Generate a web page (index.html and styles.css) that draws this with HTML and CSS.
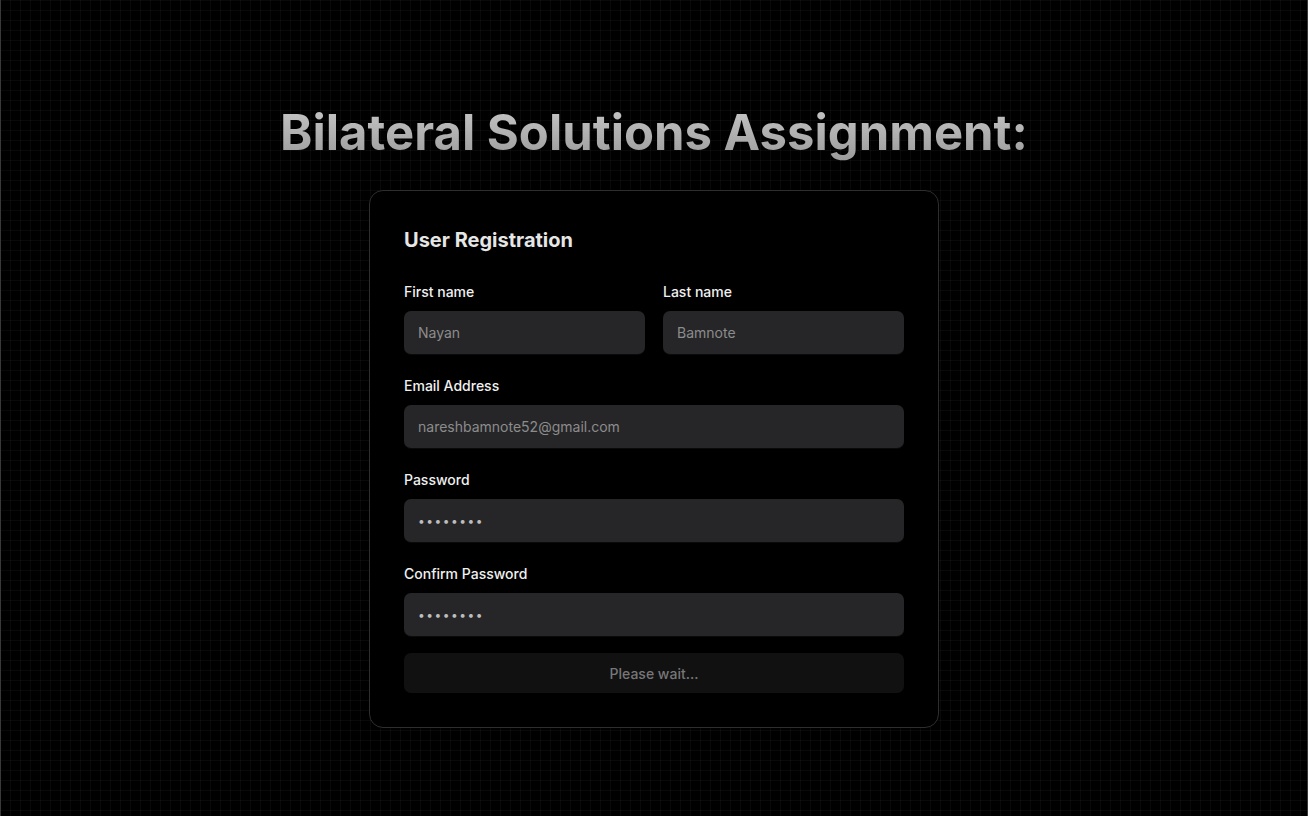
FILE: index.html
```html
<!DOCTYPE html>
<html lang="en">
<head>
<meta charset="utf-8">
<title>Bilateral Solutions Assignment</title>
<link rel="stylesheet" href="styles.css">
</head>
<body>
<main class="page">
  <h1 class="title">Bilateral Solutions Assignment:</h1>
  <form class="card">
    <h2 class="card-title">User Registration</h2>
    <div class="row">
      <div class="field">
        <label class="label">First name</label>
        <input class="input" type="text" placeholder="Nayan">
      </div>
      <div class="field">
        <label class="label">Last name</label>
        <input class="input" type="text" placeholder="Bamnote">
      </div>
    </div>
    <div class="field">
      <label class="label">Email Address</label>
      <input class="input" type="email" placeholder="nareshbamnote52@gmail.com">
    </div>
    <div class="field">
      <label class="label">Password</label>
      <input class="input" type="password" value="12345678">
    </div>
    <div class="field">
      <label class="label">Confirm Password</label>
      <input class="input" type="password" value="12345678">
    </div>
    <button class="submit" type="button" disabled>Please wait...</button>
  </form>
</main>
</body>
</html>
```

FILE: styles.css
```css
* { box-sizing: border-box; }
html, body { margin: 0; padding: 0; }
body {
  background-color: #000;
  background-image:
    linear-gradient(to right, rgba(255,255,255,0.035) 1px, transparent 1px),
    linear-gradient(to bottom, rgba(255,255,255,0.035) 1px, transparent 1px);
  background-size: 10px 10px;
  font-family: Inter, "Noto Sans", sans-serif;
  color: #e5e5e5;
}
.page {
  min-height: 816px;
  display: flex;
  flex-direction: column;
  align-items: center;
  padding-top: 104px;
  border-left: 1px solid #3a3a3a;
  border-right: 1px solid #3a3a3a;
}
.title {
  margin: 0;
  font-size: 49px;
  line-height: 58px;
  font-weight: 700;
  background: linear-gradient(to bottom, #c8c8c8, #9a9a9a);
  -webkit-background-clip: text;
  background-clip: text;
  color: transparent;
}
.card {
  margin-top: 28px;
  width: 570px;
  border: 1px solid #2e2e2e;
  border-radius: 14px;
  background: #000;
  padding: 33px 34px 34px 34px;
  display: flex;
  flex-direction: column;
}
.card-title {
  margin: 0;
  font-size: 20px;
  line-height: 32px;
  font-weight: 700;
  color: #e6e6e6;
}
.row {
  display: grid;
  grid-template-columns: minmax(0, 1fr) minmax(0, 1fr);
  gap: 18px;
  margin-top: 26px;
}
.row .field { margin-top: 0; }
.field {
  display: flex;
  flex-direction: column;
  min-width: 0;
  margin-top: 22px;
}
.label {
  font-size: 14px;
  line-height: 20px;
  font-weight: 500;
  color: #f0f0f0;
  margin-bottom: 9px;
}
.input {
  width: 100%;
  min-width: 0;
  height: 43px;
  border: none;
  border-radius: 7px;
  background: #262628;
  padding: 0 14px;
  font-family: Inter, "Noto Sans", sans-serif;
  font-size: 14px;
  color: #9a9a9a;
  outline: none;
  box-shadow: 0 1px 0 rgba(255,255,255,0.04);
}
.input::placeholder { color: #8c8c8c; }
.input[type="password"] {
  font-size: 12px;
  letter-spacing: 1.5px;
  color: #bdbdbd;
}
.submit {
  margin-top: 17px;
  height: 40px;
  border: none;
  border-radius: 7px;
  background: #111112;
  color: #777;
  font-family: Inter, "Noto Sans", sans-serif;
  font-size: 14px;
  font-weight: 500;
}
```
